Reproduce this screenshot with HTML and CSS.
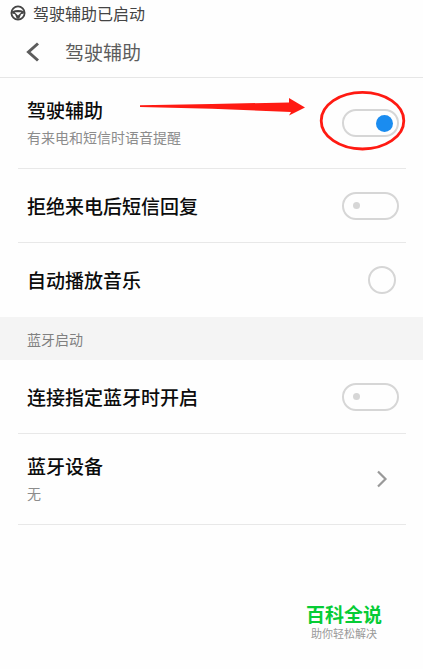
FILE: index.html
```html
<!DOCTYPE html>
<html lang="zh-CN">
<head>
<meta charset="utf-8">
<meta name="viewport" content="width=device-width, initial-scale=1">
<title>驾驶辅助</title>
<link rel="stylesheet" href="styles.css">
</head>
<body>
<div class="status">
  <svg class="status-icon" viewBox="0 0 16 16" aria-hidden="true">
    <circle cx="8" cy="8" r="6.6" fill="none" stroke="currentColor" stroke-width="1.8"/>
    <path d="M2 6.2Q8 3.6 14 6.2L13.8 8.6L11 9.2L9.2 13.8H6.8L5 9.2L2.2 8.6Z" fill="currentColor"/>
    <path d="M4.6 7.2H11.4L8 10.4Z" fill="#fff"/>
  </svg>
  <span>驾驶辅助已启动</span>
</div>
<header class="header">
  <button class="back" type="button" aria-label="返回">
    <svg class="back-icon" viewBox="0 0 14 20" aria-hidden="true"><path d="M12 1.5L2.5 10L12 18.5" fill="none" stroke="currentColor" stroke-width="3"/></svg>
  </button>
  <h1 class="title">驾驶辅助</h1>
</header>
<main>
  <section class="group">
    <div class="row row-tall">
      <label class="text" for="assist">
        <span class="label">驾驶辅助</span>
        <span class="hint">有来电和短信时语音提醒</span>
      </label>
      <input class="switch" id="assist" type="checkbox" role="switch" checked>
      <svg class="marker" viewBox="0 0 270 62" aria-hidden="true">
        <path d="M4 15.3L76 14L153 12.4L153 8L169 17.5L153 25.5L155 22L76 18.8L4 16.9Z" fill="#ff1a12"/>
        <ellipse cx="226.5" cy="30.7" rx="41.3" ry="28.3" fill="none" stroke="#ff1a12" stroke-width="2.8"/>
      </svg>
    </div>
    <div class="row">
      <label class="text" for="reply"><span class="label">拒绝来电后短信回复</span></label>
      <input class="switch" id="reply" type="checkbox" role="switch">
    </div>
    <div class="row row-last">
      <label class="text" for="music"><span class="label">自动播放音乐</span></label>
      <input class="round" id="music" type="checkbox">
    </div>
  </section>
  <h2 class="section-title">蓝牙启动</h2>
  <section class="group">
    <div class="row">
      <label class="text" for="bluetooth"><span class="label">连接指定蓝牙时开启</span></label>
      <input class="switch" id="bluetooth" type="checkbox" role="switch">
    </div>
    <button class="row row-tall" type="button">
      <span class="text">
        <span class="label">蓝牙设备</span>
        <span class="hint">无</span>
      </span>
      <svg class="chevron" viewBox="0 0 12 18" aria-hidden="true"><path d="M2 1.5L9.5 9L2 16.5" fill="none" stroke="currentColor" stroke-width="2.2"/></svg>
    </button>
  </section>
</main>
<footer class="footer">
  <div class="brand">
    <span class="brand-name">百科全说</span>
    <span class="brand-tag">助你轻松解决</span>
  </div>
</footer>
</body>
</html>
```
FILE: styles.css
```css
* {
  box-sizing: border-box;
}

body {
  margin: 0;
  background: #fefefe;
  color: #0c0c0c;
  font-family: "Noto Sans CJK SC", sans-serif;
}

.status {
  display: flex;
  align-items: center;
  gap: 7px;
  height: 26px;
  padding: 0 10px;
  color: #444;
  font-size: 16px;
  line-height: 26px;
}

.status-icon {
  width: 16px;
  height: 16px;
}

.header {
  display: flex;
  align-items: center;
  gap: 15px;
  height: 52px;
  padding: 0 16px;
  border-bottom: 1px solid #e6e6e6;
  color: #5c5c5c;
}

.back {
  display: flex;
  align-items: center;
  justify-content: center;
  width: 34px;
  height: 40px;
  padding: 0;
  border: 0;
  background: none;
  color: inherit;
}

.back-icon {
  width: 14px;
  height: 20px;
}

.title {
  margin: 0;
  font-size: 19px;
  font-weight: 400;
  line-height: 28px;
}

.group {
  padding: 0 17px 0 18px;
}

.row {
  position: relative;
  display: flex;
  align-items: center;
  justify-content: space-between;
  width: 100%;
  min-height: 74px;
  padding: 0 7px 0 9px;
  border: 0;
  border-bottom: 1px solid #e8e8e8;
  background: none;
  color: inherit;
  font-family: inherit;
  text-align: left;
}

.row-tall {
  min-height: 91px;
}

.row-last {
  border-bottom: 0;
}

.text {
  display: flex;
  flex-direction: column;
}

.label {
  font-size: 19px;
  font-weight: 500;
  line-height: 28px;
}

.hint {
  color: #8c8c8c;
  font-size: 14px;
  line-height: 26px;
}

.switch,
.round {
  flex: none;
  height: 28px;
  margin: 0;
  border: 2px solid #d6d6d6;
  border-radius: 14px;
  appearance: none;
}

.switch {
  display: flex;
  align-items: center;
  width: 57px;
  padding: 0 4px 0 9px;
}

.switch::before {
  width: 7px;
  height: 7px;
  border-radius: 50%;
  background: #d6d6d6;
  content: "";
}

.switch:checked::before {
  width: 17px;
  height: 17px;
  margin-left: auto;
  background: #1a8cf0;
}

.round {
  width: 28px;
  margin-right: 3px;
}

.round:checked {
  border-color: #1a8cf0;
}

.marker {
  position: absolute;
  top: 12px;
  right: 0;
  width: 270px;
  height: 62px;
  pointer-events: none;
}

.section-title {
  margin: 0;
  padding: 9px 27px 8px;
  background: #f4f4f4;
  color: #808080;
  font-size: 14px;
  font-weight: 400;
  line-height: 26px;
}

.chevron {
  width: 12px;
  height: 18px;
  margin-right: 11px;
  color: #999;
}

.footer {
  display: flex;
  justify-content: flex-end;
  padding: 78px 41px 24px;
}

.brand {
  display: flex;
  flex-direction: column;
  align-items: center;
}

.brand-name {
  color: #06cc35;
  font-size: 19px;
  font-weight: 700;
  line-height: 22px;
}

.brand-tag {
  color: #999;
  font-size: 11px;
  line-height: 16px;
}
```
